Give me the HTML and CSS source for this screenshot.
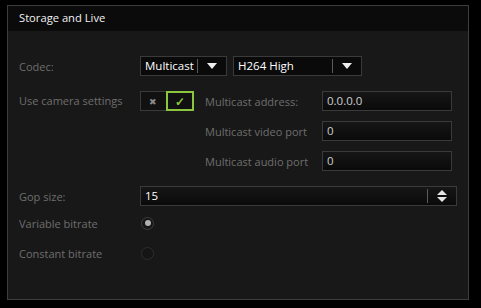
FILE: index.html
```html
<!DOCTYPE html>
<html lang="en">
<head>
    <meta charset="UTF-8">
    <title>Storage and Live</title>
    <link rel="stylesheet" href="styles.css">
</head>
<body>
    <div class="panel">
        <div class="panel-header">Storage and Live</div>

        <div class="panel-body">
            <div class="row">
                <label class="label">Codec:</label>
                <div class="selects">
                    <div class="select select-small">
                        <span class="select-text">Multicast</span>
                        <span class="select-arrow"></span>
                    </div>
                    <div class="select select-wide">
                        <span class="select-text">H264 High</span>
                        <span class="select-arrow"></span>
                    </div>
                </div>
            </div>

            <div class="row row-camera">
                <label class="label">Use camera settings</label>
                <div class="toggle">
                    <span class="toggle-off">&#x2716;</span>
                    <span class="toggle-on">&#x2713;</span>
                </div>
                <div class="multicast">
                    <span class="sub-label">Multicast address:</span>
                    <div class="input">0.0.0.0</div>
                    <span class="sub-label">Multicast video port</span>
                    <div class="input">0</div>
                    <span class="sub-label">Multicast audio port</span>
                    <div class="input">0</div>
                </div>
            </div>

            <div class="row row-gop">
                <label class="label">Gop size:</label>
                <div class="input spin">
                    <span class="spin-value">15</span>
                    <span class="spin-buttons">
                        <span class="spin-up"></span>
                        <span class="spin-down"></span>
                    </span>
                </div>
            </div>

            <div class="row row-radio">
                <label class="label">Variable bitrate</label>
                <span class="radio checked"></span>
            </div>

            <div class="row row-radio">
                <label class="label">Constant bitrate</label>
                <span class="radio"></span>
            </div>
        </div>
    </div>
</body>
</html>
```

FILE: styles.css
```css
* {
    margin: 0;
    padding: 0;
    box-sizing: border-box;
}

body {
    font-family: "Open Sans", "Noto Sans", sans-serif;
    font-size: 11px;
    background: #000;
    color: #ddd;
    width: 481px;
    height: 308px;
    overflow: hidden;
}

.panel {
    margin: 5px 0 0 7px;
    width: 462px;
    height: 295px;
    border: 1px solid #3d3d3d;
    background: #181818;
}

.panel-header {
    height: 25px;
    background: #0b0b0b;
    color: #f2f2f2;
    font-size: 11.2px;
    line-height: 24px;
    padding-left: 11px;
}

.panel-body {
    padding: 25px 0 0 11px;
}

.row {
    display: flex;
    align-items: center;
    height: 20px;
}

.label {
    width: 121px;
    color: #6e6e6e;
    font-size: 11px;
}

.selects {
    display: flex;
    gap: 6px;
}

.select {
    display: flex;
    align-items: center;
    height: 20px;
    background: #0a0a0a;
    border: 1px solid #3a3a3a;
    color: #fff;
    font-size: 11.5px;
}

.select-small {
    width: 87px;
}

.select-wide {
    width: 129px;
}

.select-text {
    flex: 1;
    padding-left: 4px;
    line-height: 18px;
}

.select-arrow {
    position: relative;
    width: 29px;
    height: 14px;
    border-left: 1px solid #5a5a5a;
}

.select-arrow::after {
    content: "";
    position: absolute;
    left: 9px;
    top: 4px;
    border-left: 5px solid transparent;
    border-right: 5px solid transparent;
    border-top: 6px solid #eee;
}

.row-camera {
    align-items: flex-start;
    height: auto;
    margin-top: 15px;
}

.row-camera .label {
    line-height: 20px;
}

.toggle {
    display: flex;
    width: 54px;
    height: 20px;
}

.toggle span {
    flex: 1;
    display: flex;
    align-items: center;
    justify-content: center;
}

.toggle-off {
    background: #111;
    border: 1px solid #3a3a3a;
    border-right: none;
    color: #8a8a8a;
    font-size: 9px;
}

.toggle-on {
    background: #111;
    border: 2px solid #8cc63f;
    color: #8cc63f;
    font-size: 12px;
    font-weight: bold;
}

.multicast {
    display: grid;
    grid-template-columns: 117px 130px;
    grid-auto-rows: 20px;
    row-gap: 10px;
    margin-left: 11px;
    align-items: center;
}

.sub-label {
    color: #6e6e6e;
    font-size: 11px;
}

.input {
    height: 20px;
    background: linear-gradient(#161616, #0a0a0a);
    border: 1px solid #3a3a3a;
    color: #cfcfcf;
    font-size: 11.5px;
    line-height: 18px;
    padding-left: 4px;
}

.row-gop {
    margin-top: 15px;
}

.spin {
    display: flex;
    align-items: center;
    width: 317px;
    color: #fff;
}

.spin-value {
    flex: 1;
}

.spin-buttons {
    display: flex;
    flex-direction: column;
    align-items: center;
    justify-content: center;
    gap: 2px;
    width: 29px;
    height: 14px;
    border-left: 1px solid #5a5a5a;
}

.spin-up {
    border-left: 5px solid transparent;
    border-right: 5px solid transparent;
    border-bottom: 5px solid #e6e6e6;
}

.spin-down {
    border-left: 5px solid transparent;
    border-right: 5px solid transparent;
    border-top: 5px solid #e6e6e6;
}

.row-radio {
    margin-top: 7px;
}

.row-radio + .row-radio {
    margin-top: 10px;
}

.radio {
    position: relative;
    margin-left: 1px;
    width: 13px;
    height: 13px;
    border-radius: 50%;
    border: 1px solid #2e2e2e;
    background: #151515;
}

.radio.checked {
    border-color: #3e3e3e;
}

.radio.checked::after {
    content: "";
    position: absolute;
    left: 2.5px;
    top: 2.5px;
    width: 6px;
    height: 6px;
    border-radius: 50%;
    background: #b0b0b0;
}
```
